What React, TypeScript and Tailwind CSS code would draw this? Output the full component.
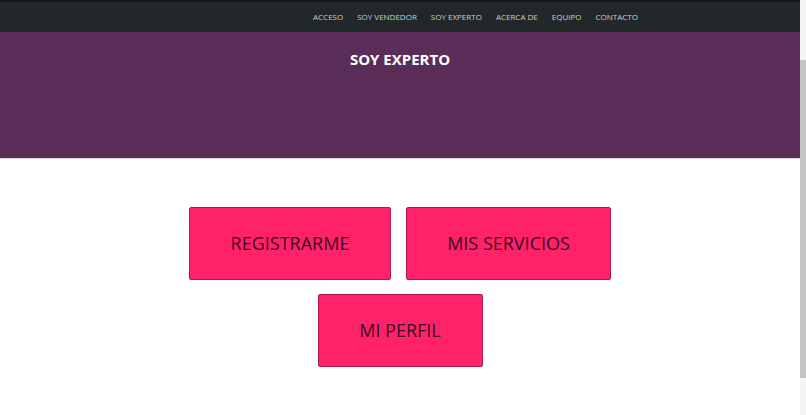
const navItems = ["ACCESO", "SOY VENDEDOR", "SOY EXPERTO", "ACERCA DE", "EQUIPO", "CONTACTO"];

function ActionButton({ label, width }: { label: string; width: string }) {
  return (
    <a
      href="#"
      className={`flex h-[73px] ${width} items-center justify-center rounded-[2px] border border-[#b3174c] bg-[#ff2269] text-[18px] text-[#3b0a22] font-['Open_Sans',sans-serif]`}
    >
      {label}
    </a>
  );
}

export default function App() {
  return (
    <div className="flex h-[415px] w-[806px] overflow-hidden bg-white">
      <div className="w-[800px] shrink-0">
        {/* Navbar */}
        <nav className="flex h-[32px] items-center justify-end gap-[14px] border-t-2 border-[#151919] bg-[#222829] pr-[162px] font-['Open_Sans',sans-serif] text-[8px] font-medium tracking-normal text-[#cdcfcf]">
          {navItems.map((item) => (
            <a key={item} href="#">
              {item}
            </a>
          ))}
        </nav>

        {/* Header */}
        <header className="h-[127px] border-b border-[#e8d6e6] bg-[#5a2d58] pt-[16px] text-center">
          <h1 className="font-['Open_Sans',sans-serif] text-[15px] font-bold text-white">SOY EXPERTO</h1>
        </header>

        {/* Actions */}
        <main className="flex flex-col items-center gap-[14px] pt-[48px]">
          <div className="flex gap-[15px]">
            <ActionButton label="REGISTRARME" width="w-[202px]" />
            <ActionButton label="MIS SERVICIOS" width="w-[205px]" />
          </div>
          <ActionButton label="MI PERFIL" width="w-[165px]" />
        </main>
      </div>

      {/* Scrollbar */}
      <div className="flex w-[6px] flex-col bg-[#f5f5f5]">
        <div className="h-[60px]" />
        <div className="h-[318px] bg-[#c4c4c4]" />
      </div>
    </div>
  );
}
